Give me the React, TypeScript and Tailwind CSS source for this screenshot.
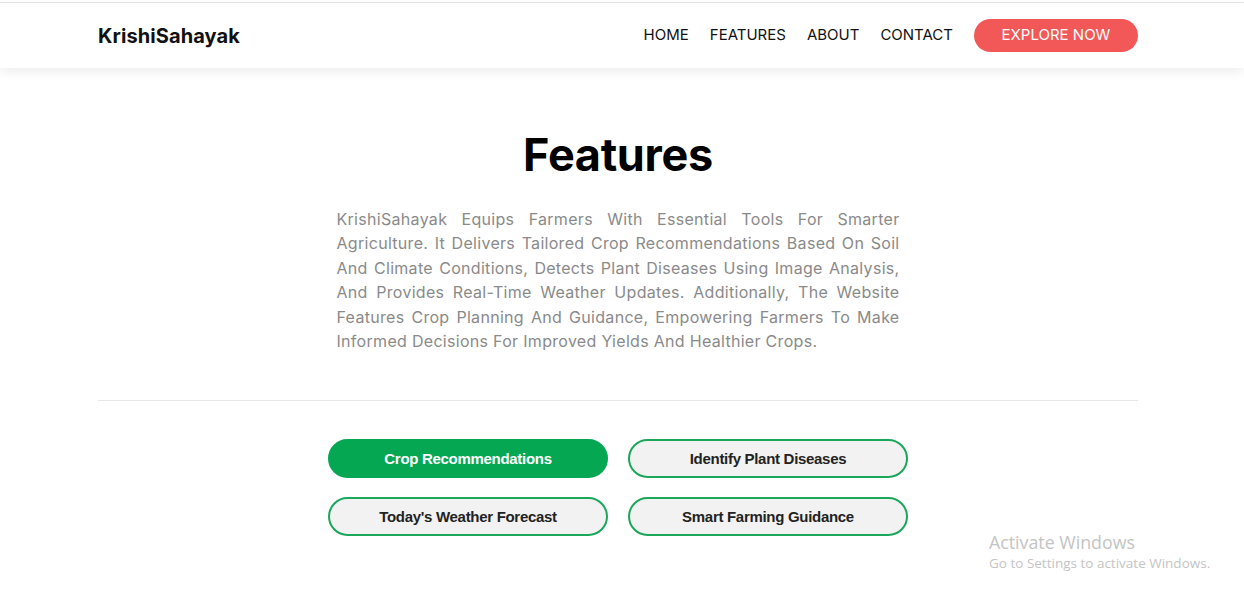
import React from "react";

export default function App() {
  const buttons = [
    { label: "Crop Recommendations", active: true },
    { label: "Identify Plant Diseases", active: false },
    { label: "Today's Weather Forecast", active: false },
    { label: "Smart Farming Guidance", active: false },
  ];
  return (
    <div className="relative min-h-[594px] w-full bg-white font-['Inter','Open_Sans',sans-serif]">
      <div className="h-[2px] bg-white" />
      <div className="h-px bg-[#e4e4e4]" />
      <header className="relative z-10 h-[65px] bg-white shadow-[0_4px_10px_rgba(0,0,0,0.07)]">
        <div className="ml-[98px] flex h-full w-[1040px] items-center justify-between">
          <div className="text-[20px] font-bold tracking-[0.1px] text-[#111]">KrishiSahayak</div>
          <nav className="flex items-center">
            <a className="mr-[21px] text-[15px] text-[#111]">HOME</a>
            <a className="mr-[21px] text-[15px] text-[#111]">FEATURES</a>
            <a className="mr-[21px] text-[15px] text-[#111]">ABOUT</a>
            <a className="mr-[21px] text-[15px] text-[#111]">CONTACT</a>
            <button className="flex h-[33px] w-[164px] items-center justify-center rounded-full bg-[#f35858] text-[15px] text-white">
              EXPLORE NOW
            </button>
          </nav>
        </div>
      </header>

      <main className="ml-[98px] w-[1040px] pt-[62px]">
        <h1 className="text-center text-[45px] font-bold leading-[50px] tracking-[-0.3px] text-black">
          Features
        </h1>
        <p className="mx-auto mt-[27px] w-[563px] text-justify text-[16px] leading-[24.4px] tracking-[0.3px] text-[#8a8a8a]">
          KrishiSahayak Equips Farmers With Essential Tools For Smarter Agriculture. It Delivers Tailored Crop
          Recommendations Based On Soil And Climate Conditions, Detects Plant Diseases Using Image Analysis, And
          Provides Real-Time Weather Updates. Additionally, The Website Features Crop Planning And Guidance,
          Empowering Farmers To Make Informed Decisions For Improved Yields And Healthier Crops.
        </p>
        <div className="mt-[47px] h-px bg-[#e8e8e8]" />
        <div className="mx-auto mt-[38px] grid w-[580px] grid-cols-2 gap-x-[20px] gap-y-[19px]">
          {buttons.map((b) =>
            b.active ? (
              <button
                key={b.label}
                className="flex h-[39px] items-center justify-center rounded-full border-2 border-[#06a752] bg-[#06a752] font-['Liberation_Sans',Arial,sans-serif] text-[15px] font-bold tracking-[-0.3px] text-white"
              >
                {b.label}
              </button>
            ) : (
              <button
                key={b.label}
                className="flex h-[39px] items-center justify-center rounded-full border-2 border-[#1aa75a] bg-[#f2f2f2] font-['Liberation_Sans',Arial,sans-serif] text-[15px] font-bold tracking-[-0.3px] text-[#222]"
              >
                {b.label}
              </button>
            )
          )}
        </div>
      </main>

      <div className="pointer-events-none absolute left-[989px] top-[531px] font-['Open_Sans',sans-serif] text-[#c4c4c4]">
        <div className="text-[17.8px] leading-[22px]">Activate Windows</div>
        <div className="text-[13.5px] leading-[20px]">Go to Settings to activate Windows.</div>
      </div>
    </div>
  );
}
